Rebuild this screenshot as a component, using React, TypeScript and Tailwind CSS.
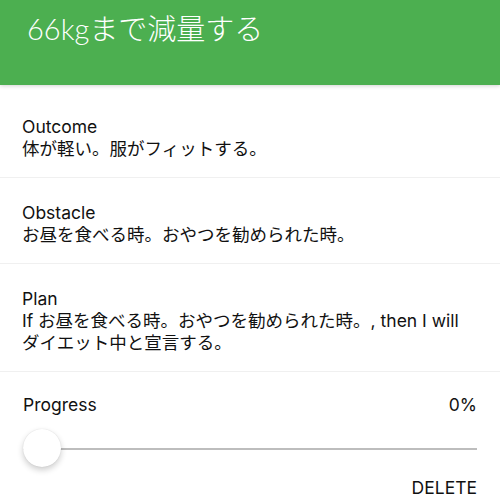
export default function App() {
  const rows = [
    { title: 'Outcome', body: '体が軽い。服がフィットする。' },
    { title: 'Obstacle', body: 'お昼を食べる時。おやつを勧められた時。' },
    {
      title: 'Plan',
      body: 'If お昼を食べる時。おやつを勧められた時。, then I will ダイエット中と宣言する。',
    },
  ]

  return (
    <main
      className="w-[500px] h-[500px] overflow-hidden bg-white text-[#111] text-[17.5px] leading-[22px]"
      style={{ fontFamily: 'Inter, "Noto Sans CJK JP", sans-serif' }}
    >
      {/* Header */}
      <header className="h-[85px] bg-[#4caf50] shadow-[0_1px_4px_rgba(0,0,0,0.18)] relative z-10 pl-[27px] pt-[11px]">
        <h1
          className="text-white text-[29px] leading-[36px] font-light"
          style={{ fontFamily: 'Lato, "Noto Sans CJK JP", sans-serif' }}
        >
          66kgまで減量する
        </h1>
      </header>

      <div className="pt-[7px]">
        {rows.map((row) => (
          <div key={row.title} className="border-b border-[#f0f0f0] pl-[22px] pr-[23px] pt-[24px] pb-[17px]">
            <p>{row.title}</p>
            <p>{row.body}</p>
          </div>
        ))}

        {/* Progress */}
        <div className="px-[23px] pt-[22px]">
          <div className="flex justify-between">
            <p>Progress</p>
            <p>0%</p>
          </div>

          <div className="relative h-[38px] mt-[13px]">
            <div className="absolute left-0 right-0 top-[19px] h-[2px] bg-[#bdbdbd]" />
            <div className="absolute left-0 top-0 w-[38px] h-[38px] rounded-full bg-white shadow-[0_3px_6px_rgba(0,0,0,0.2),0_0_1px_rgba(0,0,0,0.15)]" />
          </div>

          <div className="flex justify-end mt-[10px]">
            <button className="uppercase">Delete</button>
          </div>
        </div>
      </div>
    </main>
  )
}
